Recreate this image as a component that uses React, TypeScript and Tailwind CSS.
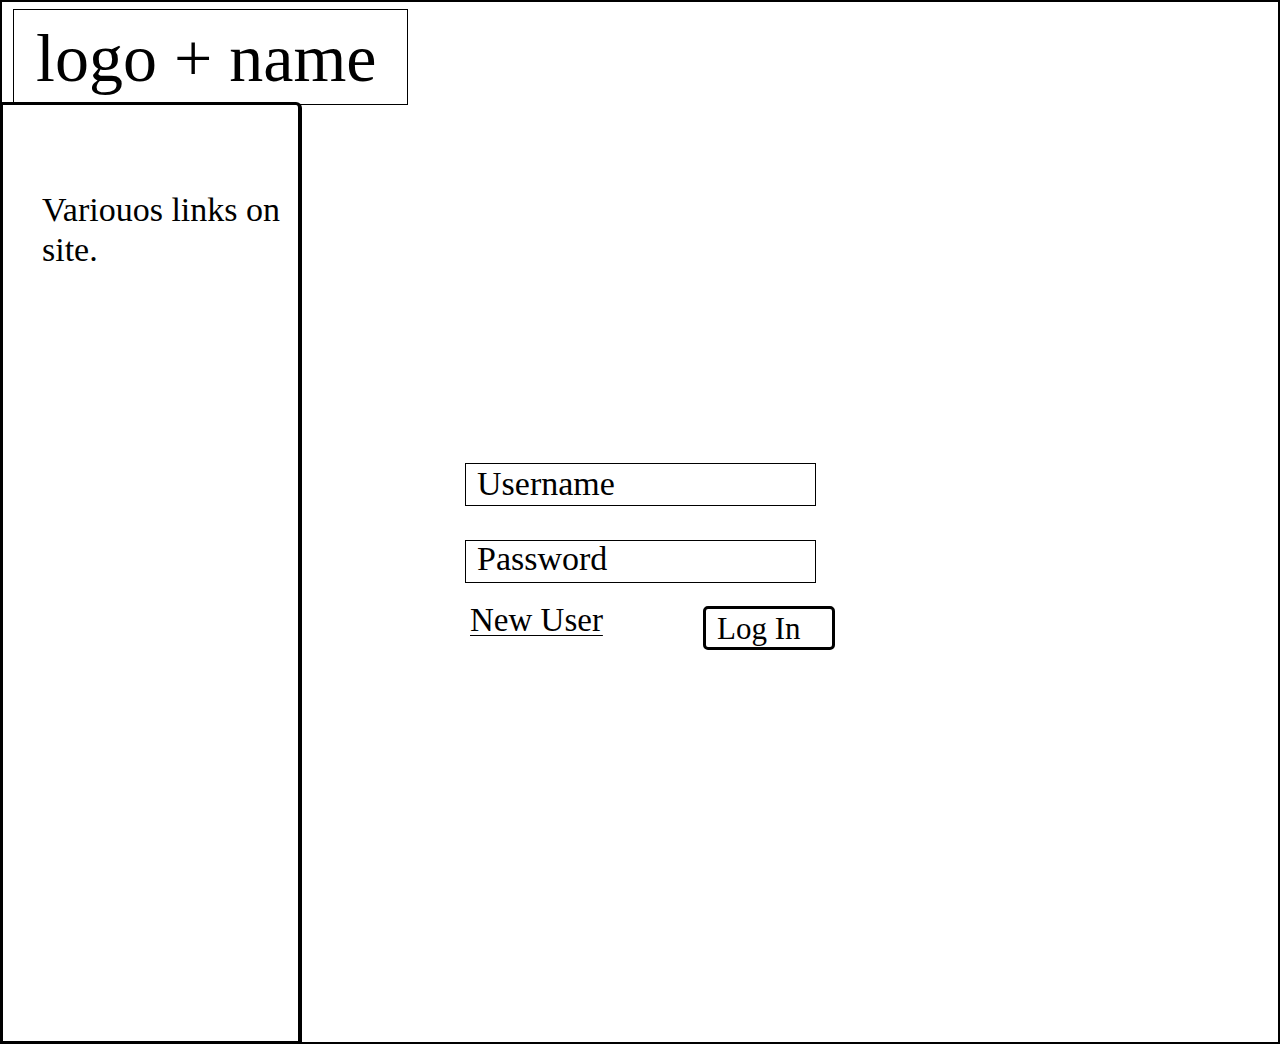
export default function App() {
  const serif = { fontFamily: '"Liberation Serif", "DejaVu Serif", serif' };
  return (
    <div
      className="w-[1280px] h-[1044px] border-2 border-black bg-white text-black flex flex-col overflow-hidden"
      style={serif}
    >
      <header className="pl-[11px] pt-[7px]">
        <div className="w-[395px] h-[96px] border border-black pl-[22px] pt-[15px]">
          <span className="block text-[68px] leading-[66px] whitespace-nowrap">logo + name</span>
        </div>
      </header>
      <div className="flex flex-1 -mt-[3px] -ml-[2px] -mb-[2px]">
        <aside className="w-[302px] border-[3px] border-r-4 border-black rounded-tr-[6px] pl-[39px] pt-[85px]">
          <p className="text-[34px] leading-[40px] w-[250px]">Variouos links on site.</p>
        </aside>
        <main className="flex-1 pl-[163px] pt-[361px]">
          <div className="flex flex-col w-[351px]">
            <div className="h-[43px] border border-black pl-[11px] text-[34px] leading-[40px]">
              Username
            </div>
            <div className="h-[43px] border border-black pl-[11px] text-[34px] leading-[36px] mt-[34px]">
              Password
            </div>
            <div className="flex items-start mt-[22px]">
              <div className="ml-[5px] w-[233px] shrink-0">
                <a
                  href="#"
                  className="whitespace-nowrap text-[33px] leading-[30px] underline underline-offset-[4px] decoration-1"
                >
                  New User
                </a>
              </div>
              <button className="mt-[1px] w-[132px] h-[44px] shrink-0 border-[3px] border-black rounded-[5px] text-left pl-[11px] text-[31px] leading-[40px]">
                Log In
              </button>
            </div>
          </div>
        </main>
      </div>
    </div>
  );
}
